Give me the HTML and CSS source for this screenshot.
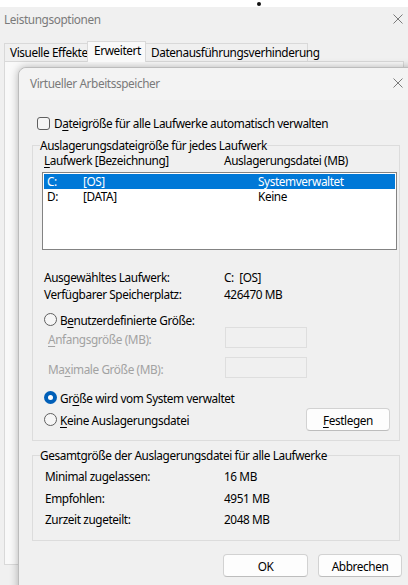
FILE: index.html
```html
<!DOCTYPE html>
<html lang="de">
<head>
<meta charset="utf-8">
<title>Virtueller Arbeitsspeicher</title>
<link rel="stylesheet" href="styles.css">
</head>
<body>
<div class="desk">
  <div class="desk-strip"><span class="cursor-dot"></span></div>

  <!-- Parent window: Leistungsoptionen -->
  <div class="window">
    <div class="titlebar">
      <span class="title">Leistungsoptionen</span>
      <svg class="close" width="10" height="10" viewBox="0 0 10 10"><path d="M0.5 0.5 9.5 9.5M9.5 0.5 0.5 9.5"/></svg>
    </div>
    <div class="tabs">
      <div class="tab tab-visual">Visuelle Effekte</div>
      <div class="tab tab-adv active">Erweitert</div>
      <div class="tab tab-dep">Datenausführungsverhinderung</div>
    </div>
    <div class="tab-panel"></div>
  </div>

  <!-- Modal dialog: Virtueller Arbeitsspeicher -->
  <div class="dialog">
    <div class="dialog-titlebar">
      <span class="title">Virtueller Arbeitsspeicher</span>
      <svg class="close" width="10" height="10" viewBox="0 0 10 10"><path d="M0.5 0.5 9.5 9.5M9.5 0.5 0.5 9.5"/></svg>
    </div>

    <div class="dialog-body">
      <label class="check-row">
        <span class="checkbox"></span>
        <span>D<u>a</u>teigröße für alle Laufwerke automatisch verwalten</span>
      </label>

      <fieldset class="group group-drives">
        <legend>Auslagerungsdateigröße für jedes Laufwerk</legend>
        <div class="pair-grid list-head">
          <span><u>L</u>aufwerk [Bezeichnung]</span>
          <span>Auslagerungsdatei (MB)</span>
        </div>
        <div class="listbox">
          <div class="list-row selected"><span>C:</span><span>[OS]</span><span>Systemverwaltet</span></div>
          <div class="list-row"><span>D:</span><span>[DATA]</span><span>Keine</span></div>
        </div>

        <div class="pair-grid info">
          <span>Ausgewähltes Laufwerk:</span><span>C:&nbsp; [OS]</span>
          <span>Verfügbarer Speicherplatz:</span><span>426470 MB</span>
        </div>

        <label class="radio-row custom">
          <span class="radio"></span>
          <span>B<u>e</u>nutzerdefinierte Größe:</span>
        </label>
        <div class="size-row first">
          <span class="disabled-label"><u>A</u>nfangsgröße (MB):</span>
          <span class="textbox"></span>
        </div>
        <div class="size-row">
          <span class="disabled-label">Ma<u>x</u>imale Größe (MB):</span>
          <span class="textbox"></span>
        </div>

        <label class="radio-row system">
          <span class="radio checked"></span>
          <span>Gr<u>ö</u>ße wird vom System verwaltet</span>
        </label>
        <div class="last-row">
          <label class="radio-row">
            <span class="radio"></span>
            <span><u>K</u>eine Auslagerungsdatei</span>
          </label>
          <button class="btn btn-set"><u>F</u>estlegen</button>
        </div>
      </fieldset>

      <fieldset class="group group-total">
        <legend>Gesamtgröße der Auslagerungsdatei für alle Laufwerke</legend>
        <div class="pair-grid totals">
          <span>Minimal zugelassen:</span><span>16 MB</span>
          <span>Empfohlen:</span><span>4951 MB</span>
          <span>Zurzeit zugeteilt:</span><span>2048 MB</span>
        </div>
      </fieldset>

      <div class="dialog-buttons">
        <button class="btn btn-ok">OK</button>
        <button class="btn btn-cancel">Abbrechen</button>
      </div>
    </div>
  </div>
</div>
</body>
</html>
```
FILE: styles.css
```css
* { box-sizing: border-box; }

html, body {
  margin: 0;
  padding: 0;
}

body {
  font-family: "Noto Sans", "Open Sans", sans-serif;
  font-size: 11.8px;
  letter-spacing: -0.4px;
  color: #000;
  background: #f0f0f0;
}

u { text-decoration-thickness: 1px; text-underline-offset: 2px; }

.desk {
  position: relative;
  width: 408px;
  height: 585px;
  overflow: hidden;
  background: #f0f0f0;
}

.desk-strip {
  position: relative;
  height: 7px;
  background: #fff;
}

.cursor-dot {
  position: absolute;
  left: 257px;
  top: 2px;
  width: 4px;
  height: 4px;
  border-radius: 50%;
  background: #111;
}

/* ---------- parent window ---------- */
.window {
  display: flex;
  flex-direction: column;
  height: 578px;
  background: #f0f0f0;
}

.titlebar {
  height: 23px;
  display: flex;
  align-items: center;
  justify-content: space-between;
  padding: 0 5px 0 4px;
}

.title {
  color: #7a7a7a;
}

.close path {
  stroke: #7a7a7a;
  stroke-width: 1;
  fill: none;
}

.tabs {
  display: flex;
  align-items: flex-end;
  height: 31px;
  padding-left: 4px;
}

.tab {
  height: 18px;
  line-height: 17px;
  padding-left: 5px;
  border: 1px solid #d9d9d9;
  border-bottom: none;
  background: #f0f0f0;
  white-space: nowrap;
}

.tab-visual { width: 83px; border-right: none; }
.tab-adv { width: 59px; padding-left: 6px; }
.tab-dep { width: 162px; border-left: none; }

.tab.active {
  height: 21px;
  line-height: 16px;
  background: #f9f9f9;
  margin-bottom: -1px;
  position: relative;
  z-index: 1;
}

.tab-panel {
  height: 504px;
  margin-left: 4px;
  width: 400px;
  border: 1px solid #d9d9d9;
  background: #f9f9f9;
}

/* ---------- dialog ---------- */
.dialog {
  position: absolute;
  left: 18px;
  top: 67px;
  width: 400px;
  height: 530px;
  background: #f0f0f0;
  border: 1px solid #bcbcbc;
  border-radius: 8px 8px 0 0;
  box-shadow: 0 0 9px rgba(0, 0, 0, 0.28);
}

.dialog-titlebar {
  height: 32px;
  display: flex;
  align-items: center;
  justify-content: space-between;
  padding: 0 14px 3px 11px;
  background: #f3f3f3;
  border-radius: 8px 8px 0 0;
}

.dialog-body {
  padding: 0 17px 0 13px;
  line-height: 16px;
}

.check-row {
  display: flex;
  align-items: center;
  margin: 15px 0 0 5px;
  height: 16px;
}

.checkbox {
  width: 13px;
  height: 13px;
  border: 1px solid #5f5f5f;
  border-radius: 3px;
  background: #f6f6f6;
  margin-right: 4px;
}

.group {
  margin: 6px 0 0;
  padding: 0 2px 9px 11px;
  border: 1px solid #dcdcdc;
  min-width: 0;
}

.group legend {
  padding: 0;
  margin-left: -4px;
  line-height: 16px;
}

.pair-grid {
  display: grid;
  grid-template-columns: 180px 1fr;
}

.list-head { margin-top: -1px; }

.listbox {
  margin: 4px 0 0 -2px;
  height: 78px;
  border: 1px solid #838383;
  background: #fff;
  padding: 1px;
}

.list-row {
  display: grid;
  grid-template-columns: 36px 175px 1fr;
  height: 15px;
  line-height: 15px;
  padding-left: 3px;
}

.list-row.selected {
  background: #0078d7;
  color: #fff;
}

.info {
  margin-top: 19px;
  line-height: 17px;
}

.radio-row {
  display: flex;
  align-items: center;
  height: 17px;
}

.radio {
  width: 13px;
  height: 13px;
  border: 1px solid #5f5f5f;
  border-radius: 50%;
  background: #f6f6f6;
  margin-right: 3px;
  flex: none;
}

.radio.checked {
  border: none;
  background: #005fb8;
  display: flex;
  align-items: center;
  justify-content: center;
}

.radio.checked::after {
  content: "";
  width: 5px;
  height: 5px;
  border-radius: 50%;
  background: #fff;
}

.custom { margin-top: 8px; }

.size-row {
  display: grid;
  grid-template-columns: 181px 82px;
  align-items: center;
  margin-top: 9px;
}

.size-row.first { margin-top: -1px; }

.disabled-label {
  color: #a2a2a2;
  padding: 2px 0 0 4px;
}

.textbox {
  height: 21px;
  border: 1px solid #dedede;
  background: #f0f0f0;
}

.system { margin-top: 11px; }

.last-row {
  display: flex;
  align-items: center;
  justify-content: space-between;
  margin-top: 2px;
  margin-right: 7px;
}

.btn {
  font: inherit;
  letter-spacing: inherit;
  color: #000;
  height: 23px;
  padding: 0;
  background: #fdfdfd;
  border: 1px solid #d2d2d2;
  border-bottom-color: #bdbdbd;
  border-radius: 4px;
}

.btn-set { width: 84px; }

.group-total {
  margin-top: 6px;
  padding-bottom: 13px;
}

.totals {
  margin: 5px 0 0 1px;
  grid-template-columns: 179px 1fr;
  row-gap: 5.5px;
}

.dialog-buttons {
  display: flex;
  justify-content: flex-end;
  gap: 10px;
  margin: 13px -2px 0 0;
}

.btn-ok { width: 85px; }
.btn-cancel { width: 84px; }
```
